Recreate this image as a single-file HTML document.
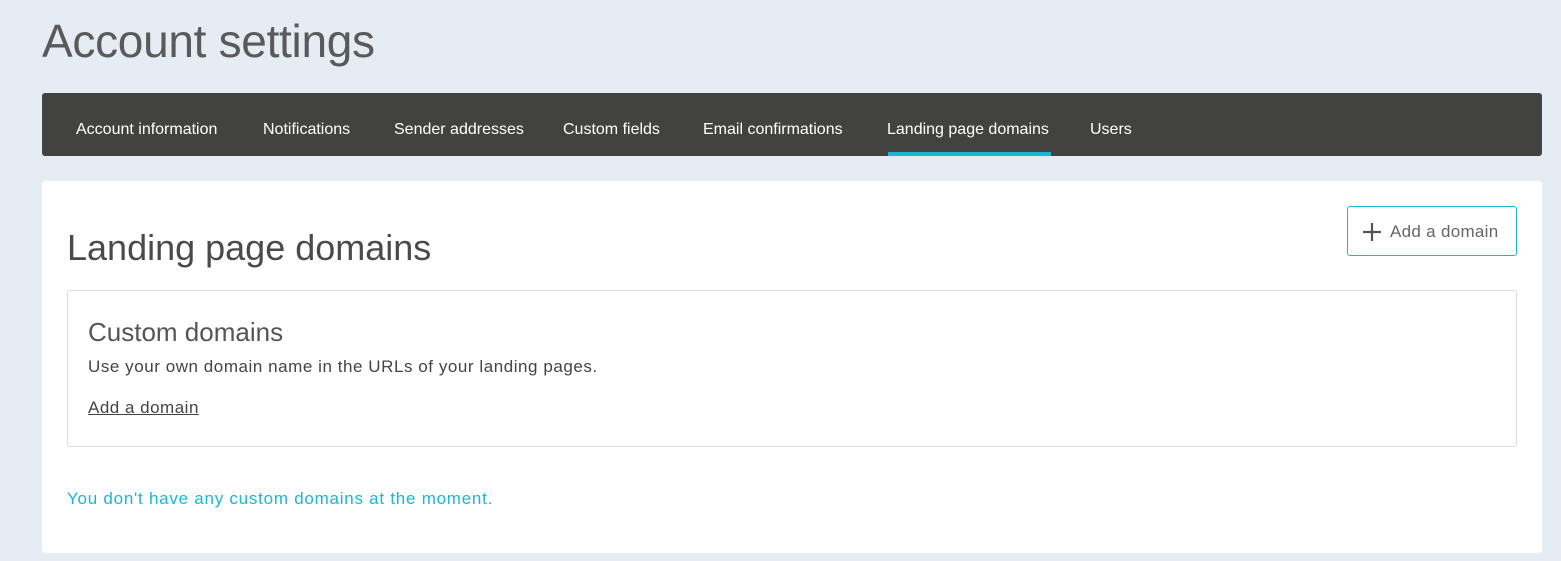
<!DOCTYPE html>
<html><head><style>
body{margin:0;width:1561px;height:561px;background:#e5ecf3;font-family:"Liberation Sans",sans-serif;position:relative;overflow:hidden}
.a{position:absolute;white-space:nowrap}
h1{position:absolute;left:42px;top:14px;margin:0;font-weight:300;font-size:46px;color:#5a5a5a;letter-spacing:-0.3px}
.nav{position:absolute;left:42px;top:93px;width:1500px;height:63px;background:#424240;border-radius:3px}
.nav span{position:absolute;top:28px;font-size:16px;color:#fff}
.ul{position:absolute;left:846px;top:59px;width:163px;height:4px;background:#1ab6d6}
.card{position:absolute;left:42px;top:181px;width:1500px;height:372px;background:#fff;border-radius:3px}
.box{position:absolute;left:25px;top:109px;width:1448px;height:155px;border:1px solid #dcdcdc;border-radius:3px}
.btn{position:absolute;left:1305px;top:25px;width:170px;height:50px;border:1px solid #1ab6d6;border-radius:3px;box-sizing:border-box}
</style></head><body>
<h1>Account settings</h1>
<div class="nav">
<span style="left:34px">Account information</span>
<span style="left:221px">Notifications</span>
<span style="left:352px">Sender addresses</span>
<span style="left:521px">Custom fields</span>
<span style="left:661px">Email confirmations</span>
<span style="left:845px">Landing page domains</span>
<span style="left:1048px">Users</span>
<div class="ul"></div>
</div>
<div class="card">
<div class="a" style="left:25px;top:46px;font-size:36px;font-weight:300;color:#4a4a4a">Landing page domains</div>
<div class="btn">
<svg class="a" style="left:14px;top:15px" width="20" height="20"><path d="M10 1V19M1 10H19" stroke="#555" stroke-width="2.2"/></svg>
<div class="a" style="left:42px;top:15px;font-size:17px;color:#666;letter-spacing:0.3px">Add a domain</div>
</div>
<div class="box">
<div class="a" style="left:20px;top:26px;font-size:26px;font-weight:300;color:#555">Custom domains</div>
<div class="a" style="left:20px;top:66px;font-size:17px;color:#444;letter-spacing:0.55px">Use your own domain name in the URLs of your landing pages.</div>
<div class="a" style="left:20px;top:107px;font-size:17px;color:#444;text-decoration:underline;letter-spacing:0.5px">Add a domain</div>
</div>
<div class="a" style="left:25px;top:308px;font-size:17px;color:#1ab6d6;letter-spacing:0.75px">You don't have any custom domains at the moment.</div>
</div>
</body></html>
